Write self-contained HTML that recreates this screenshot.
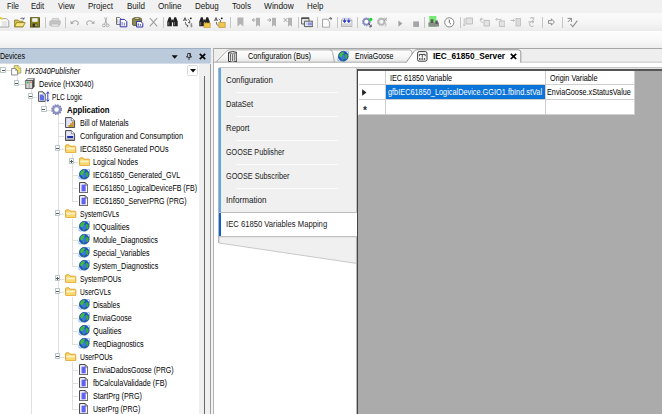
<!DOCTYPE html><html><head><meta charset="utf-8"><title>IEC 61850 Server</title><style>
html,body{margin:0;padding:0;background:#f0f0f0;}
body{width:662px;height:414px;position:relative;overflow:hidden;font-family:"Liberation Sans", "DejaVu Sans", sans-serif;}
.b{position:absolute;}
.t{position:absolute;white-space:pre;line-height:12px;height:12px;transform-origin:0 50%;}

</style></head><body>
<div class="b" style="left:0;top:0;width:662px;height:13px;background:#f1f1f1"></div>
<div class="b" style="left:0;top:12.6px;width:662px;height:18.2px;background:linear-gradient(#fafafa,#f5f5f5 55%,#ebebeb)"></div>
<div class="b" style="left:0;top:30.8px;width:662px;height:17px;background:linear-gradient(#fdfdfd,#f9f9f9 50%,#eeeeee)"></div>
<div class="b" style="left:0;top:47.5px;width:210.7px;height:1px;background:#9fb0c4"></div>
<div class="b" style="left:0;top:48.5px;width:210.7px;height:14px;background:#bccbdc"></div>
<div class="b" style="left:0;top:62.5px;width:210px;height:1.5px;background:#d3dce8"></div>
<div class="b" style="left:0;top:64px;width:199px;height:350px;background:#fff"></div>
<div class="b" style="left:199px;top:64px;width:11px;height:350px;background:#f0f0f0"></div>
<div class="b" style="left:203.8px;top:76px;width:1.1px;height:338px;background:#686868"></div>
<div class="b" style="left:210.2px;top:63.5px;width:1.1px;height:351px;background:#9c9c9c"></div>
<svg style="position:absolute;left:171px;top:52.8px" width="8" height="8" viewBox="0 0 8 8"><path d="M.6 2.2 H6.8 L3.7 5.8Z" fill="#111"/></svg>
<svg style="position:absolute;left:185.6px;top:53px" width="6" height="7" viewBox="0 0 6 7"><path d="M1.7 .5 H4.4 V3.3 H5.3 V4.2 H.7 V3.3 H1.7Z" fill="#e8edf3" stroke="#111" stroke-width=".8"/><path d="M3.5 .6 H4.4 V3.4 H3.5Z" fill="#111"/><path d="M3 4.2 V6.9" stroke="#111" stroke-width=".9"/></svg>
<svg style="position:absolute;left:198.5px;top:52.5px" width="7" height="7" viewBox="0 0 7 7"><path d="M.8 .8 L6.2 6.2 M6.2 .8 L.8 6.2" stroke="#000" stroke-width="1.7"/></svg>
<div class="b" style="left:186.6px;top:65px;width:11px;height:10.5px;background:#fff;border:.7px solid #dadada;border-radius:1.5px;box-sizing:border-box"></div>
<svg style="position:absolute;left:189.9px;top:68.9px" width="6" height="4" viewBox="0 0 6 4"><path d="M0 0 H6 L3 3.4Z" fill="#111"/></svg>
<div class="b" style="left:6.2px;top:69.8px;width:5.2px;height:.8px;background:#e0e0e0"></div>
<div class="b" style="left:17.0px;top:76px;width:.8px;height:8px;background:#e0e0e0"></div>
<div class="b" style="left:31.0px;top:89px;width:.8px;height:325px;background:#e0e0e0"></div>
<div class="b" style="left:44.6px;top:102px;width:.8px;height:8px;background:#e0e0e0"></div>
<div class="b" style="left:58.0px;top:115px;width:.8px;height:242px;background:#e0e0e0"></div>
<div class="b" style="left:71.6px;top:154px;width:.8px;height:47px;background:#e0e0e0"></div>
<div class="b" style="left:71.6px;top:219px;width:.8px;height:47px;background:#e0e0e0"></div>
<div class="b" style="left:71.6px;top:297px;width:.8px;height:47px;background:#e0e0e0"></div>
<div class="b" style="left:71.6px;top:362px;width:.8px;height:47px;background:#e0e0e0"></div>
<div class="b" style="left:17.4px;top:83.6px;width:8.100000000000001px;height:.8px;background:#e0e0e0"></div>
<div class="b" style="left:31.4px;top:96.6px;width:5.300000000000004px;height:.8px;background:#e0e0e0"></div>
<div class="b" style="left:45.0px;top:109.6px;width:5.899999999999999px;height:.8px;background:#e0e0e0"></div>
<div class="b" style="left:58.4px;top:122.6px;width:6.100000000000001px;height:.8px;background:#e0e0e0"></div>
<div class="b" style="left:58.4px;top:135.6px;width:6.100000000000001px;height:.8px;background:#e0e0e0"></div>
<div class="b" style="left:58.4px;top:148.6px;width:6.100000000000001px;height:.8px;background:#e0e0e0"></div>
<div class="b" style="left:72.0px;top:161.6px;width:6.099999999999994px;height:.8px;background:#e0e0e0"></div>
<div class="b" style="left:72.0px;top:174.6px;width:6.099999999999994px;height:.8px;background:#e0e0e0"></div>
<div class="b" style="left:72.0px;top:187.6px;width:6.099999999999994px;height:.8px;background:#e0e0e0"></div>
<div class="b" style="left:72.0px;top:200.6px;width:6.099999999999994px;height:.8px;background:#e0e0e0"></div>
<div class="b" style="left:58.4px;top:213.6px;width:6.100000000000001px;height:.8px;background:#e0e0e0"></div>
<div class="b" style="left:72.0px;top:226.6px;width:6.099999999999994px;height:.8px;background:#e0e0e0"></div>
<div class="b" style="left:72.0px;top:239.6px;width:6.099999999999994px;height:.8px;background:#e0e0e0"></div>
<div class="b" style="left:72.0px;top:252.6px;width:6.099999999999994px;height:.8px;background:#e0e0e0"></div>
<div class="b" style="left:72.0px;top:265.6px;width:6.099999999999994px;height:.8px;background:#e0e0e0"></div>
<div class="b" style="left:58.4px;top:278.6px;width:6.100000000000001px;height:.8px;background:#e0e0e0"></div>
<div class="b" style="left:58.4px;top:291.6px;width:6.100000000000001px;height:.8px;background:#e0e0e0"></div>
<div class="b" style="left:72.0px;top:304.6px;width:6.099999999999994px;height:.8px;background:#e0e0e0"></div>
<div class="b" style="left:72.0px;top:317.6px;width:6.099999999999994px;height:.8px;background:#e0e0e0"></div>
<div class="b" style="left:72.0px;top:330.6px;width:6.099999999999994px;height:.8px;background:#e0e0e0"></div>
<div class="b" style="left:72.0px;top:343.6px;width:6.099999999999994px;height:.8px;background:#e0e0e0"></div>
<div class="b" style="left:58.4px;top:356.6px;width:6.100000000000001px;height:.8px;background:#e0e0e0"></div>
<div class="b" style="left:72.0px;top:369.6px;width:6.099999999999994px;height:.8px;background:#e0e0e0"></div>
<div class="b" style="left:72.0px;top:382.6px;width:6.099999999999994px;height:.8px;background:#e0e0e0"></div>
<div class="b" style="left:72.0px;top:395.6px;width:6.099999999999994px;height:.8px;background:#e0e0e0"></div>
<div class="b" style="left:72.0px;top:408.6px;width:6.099999999999994px;height:.8px;background:#e0e0e0"></div>
<div class="b" style="left:0.2999999999999998px;top:67.39999999999999px;width:5.4px;height:5.4px;background:#fff;border:.7px solid #b4c6c6;box-sizing:border-box;border-radius:.8px"></div>
<div class="b" style="left:1.5px;top:69.69999999999999px;width:3px;height:.8px;background:#5a5a5a"></div>
<svg style="position:absolute;left:11.4px;top:65.3px" width="10.4" height="10.6" viewBox="0 0 10.4 10.6"><path d="M3.2 .6 H7.2 L9.8 3.2 V8.2 H3.2Z" fill="#ebe466" stroke="#8d8d6e" stroke-width=".7"/><path d="M7.2 .6 V3.2 H9.8" fill="#fff9b0" stroke="#8d8d6e" stroke-width=".5"/><path d="M.6 3.6 H4.6 L6.6 5.6 V10 H.6Z" fill="#fff" stroke="#707070" stroke-width=".8"/><path d="M4.6 3.6 V5.6 H6.6" fill="none" stroke="#707070" stroke-width=".5"/></svg>
<div class="b" style="left:13.8px;top:80.39999999999999px;width:5.4px;height:5.4px;background:#fff;border:.7px solid #b4c6c6;box-sizing:border-box;border-radius:.8px"></div>
<div class="b" style="left:15.0px;top:82.69999999999999px;width:3px;height:.8px;background:#5a5a5a"></div>
<svg style="position:absolute;left:25.0px;top:78.1px" width="10.4" height="11.4" viewBox="0 0 10.4 11.4"><path d="M.8 2.4 L2.8 .6 H9.6 V8.8 L7.6 10.8 H.8Z" fill="#4a4a4a"/><path d="M.8 2.4 L2.8 .6 H9.6 L7.6 2.4Z" fill="#f2f2f2" stroke="#555" stroke-width=".5"/><rect x=".8" y="2.4" width="6.8" height="8.4" fill="#d6d6d6" stroke="#4a4a4a" stroke-width=".8"/><path d="M4.2 3 V10.4" stroke="#8c8c8c" stroke-width=".7"/><circle cx="2.8" cy="4.6" r="1" fill="#2fbf40"/><circle cx="5.9" cy="4.3" r=".8" fill="#d84a4a"/></svg>
<div class="b" style="left:27.5px;top:93.39999999999999px;width:5.4px;height:5.4px;background:#fff;border:.7px solid #b4c6c6;box-sizing:border-box;border-radius:.8px"></div>
<div class="b" style="left:28.7px;top:95.69999999999999px;width:3px;height:.8px;background:#5a5a5a"></div>
<svg style="position:absolute;left:37.6px;top:90.89999999999999px" width="12" height="11.4" viewBox="0 0 12 11.4"><path d="M.6 .8 H5 L7.2 3 V10.4 H.6Z" fill="#fff" stroke="#3c3c3c" stroke-width=".9"/><path d="M5 .8 V3 H7.2" fill="none" stroke="#3c3c3c" stroke-width=".5"/><path d="M1.7 3.6 H4.6 L6 5 V9.4 H1.7Z" fill="#5f70e6"/><path d="M9.8 1 V10.2 M8.6 2.6 L9.8 .8 L11 2.6 M8.6 8.6 L9.8 10.4 L11 8.6" stroke="#3040e0" stroke-width="1" fill="none"/></svg>
<div class="b" style="left:41.199999999999996px;top:106.39999999999999px;width:5.4px;height:5.4px;background:#fff;border:.7px solid #b4c6c6;box-sizing:border-box;border-radius:.8px"></div>
<div class="b" style="left:42.4px;top:108.69999999999999px;width:3px;height:.8px;background:#5a5a5a"></div>
<svg style="position:absolute;left:51.4px;top:103.7px" width="11.6" height="11.6" viewBox="0 0 11.6 11.6"><circle cx="5.6" cy="5.6" r="3.5" fill="none" stroke="#8a90c2" stroke-width="2.4"/><circle cx="5.6" cy="5.6" r="4.9" fill="none" stroke="#7c82b6" stroke-width="1.1" stroke-dasharray="1.5 1.07"/><circle cx="5.6" cy="5.6" r="2.3" fill="#fff" stroke="#a4a9d0" stroke-width=".5"/></svg>
<svg style="position:absolute;left:65.4px;top:117.1px" width="10.4" height="11.2" viewBox="0 0 10.4 11.2"><path d="M.6 .6 H6.4 L9.6 3.8 V10.6 H.6Z" fill="#e2e2fa" stroke="#333" stroke-width=".9"/><path d="M6.4 .6 V3.8 H9.6" fill="#fff" stroke="#333" stroke-width=".5"/><path d="M3.4 10 V8 H5.2 V6.2 H7 V4.6 H8.8 V10Z" fill="#c8962c"/></svg>
<svg style="position:absolute;left:65.4px;top:130.10000000000002px" width="10.4" height="11.2" viewBox="0 0 10.4 11.2"><path d="M.6 .6 H6.4 L9.6 3.8 V10.6 H.6Z" fill="#e6e6fa" stroke="#333" stroke-width=".9"/><path d="M6.4 .6 V3.8 H9.6" fill="#fff" stroke="#333" stroke-width=".5"/><rect x="2.2" y="6" width="6" height="2" fill="#1f2fa6"/><path d="M1.4 9.2 H8.8" stroke="#8a8a8a" stroke-width="1.2"/></svg>
<div class="b" style="left:55.0px;top:145.4px;width:5.4px;height:5.4px;background:#fff;border:.7px solid #b4c6c6;box-sizing:border-box;border-radius:.8px"></div>
<div class="b" style="left:56.2px;top:147.7px;width:3px;height:.8px;background:#5a5a5a"></div>
<svg style="position:absolute;left:65.0px;top:143.70000000000002px" width="11.6" height="9.4" viewBox="0 0 11.6 9.4"><path d="M.6 2 Q.6 .8 1.6 .8 H3.8 L5 2.2 H9.8 Q10.8 2.2 10.8 3.2 V7.8 Q10.8 8.8 9.8 8.8 H1.6 Q.6 8.8 .6 7.8Z" fill="#f7d873" stroke="#dc9c1e" stroke-width=".9"/><path d="M1.3 3.6 H10.1 V5.4 H1.3Z" fill="#fdf3c4"/></svg>
<div class="b" style="left:68.7px;top:158.4px;width:5.4px;height:5.4px;background:#fff;border:.7px solid #b4c6c6;box-sizing:border-box;border-radius:.8px"></div>
<div class="b" style="left:69.9px;top:160.7px;width:3px;height:.8px;background:#5a5a5a"></div>
<div class="b" style="left:71.0px;top:159.6px;width:.8px;height:3px;background:#5a5a5a"></div>
<svg style="position:absolute;left:78.6px;top:156.70000000000002px" width="11.6" height="9.4" viewBox="0 0 11.6 9.4"><path d="M.6 2 Q.6 .8 1.6 .8 H3.8 L5 2.2 H9.8 Q10.8 2.2 10.8 3.2 V7.8 Q10.8 8.8 9.8 8.8 H1.6 Q.6 8.8 .6 7.8Z" fill="#f7d873" stroke="#dc9c1e" stroke-width=".9"/><path d="M1.3 3.6 H10.1 V5.4 H1.3Z" fill="#fdf3c4"/></svg>
<svg style="position:absolute;left:77.89999999999999px;top:167.70000000000002px" width="12.6" height="12.6" viewBox="0 0 12 12"><ellipse cx="6" cy="6" rx="6.3" ry="2.3" transform="rotate(-40 6 6)" fill="none" stroke="#7db6f6" stroke-width=".9"/><circle cx="6" cy="6" r="4.7" fill="#1f54c6"/><circle cx="5.8" cy="6.8" r="2.2" fill="#3a78e0"/><path d="M2 4.6 Q2.8 2.2 5.6 1.7 Q7.2 2.2 6.4 3.6 Q5.4 4.6 4.8 5.6 Q4.2 7.4 3 7 Q1.7 6.2 2 4.6Z" fill="#3fbe44"/><path d="M7.4 3.8 Q9.4 3.4 10.3 5.2 Q10.6 7.6 8.9 9 Q7.6 8.2 7.9 6.6 Q7 5 7.4 3.8Z" fill="#37ad3c"/><path d="M4.4 8.8 Q5.6 8.2 6.6 9.4 Q5.8 10.5 4.8 10.2Z" fill="#2e9c50"/><circle cx="6" cy="6" r="4.7" fill="none" stroke="#173a8a" stroke-width=".5"/><path d="M8.4 1.6 Q10.4 1 11.3 1.9" stroke="#a8d2ff" stroke-width=".8" fill="none"/></svg>
<svg style="position:absolute;left:79.1px;top:181.9px" width="9.4" height="11.4" viewBox="0 0 9.4 11.4"><path d="M.6 .6 H6.2 L8.8 3.2 V10.8 H.6Z" fill="#fff" stroke="#3a3a3a" stroke-width="1"/><path d="M6.2 .6 V3.2 H8.8" fill="none" stroke="#3a3a3a" stroke-width=".6"/><rect x="2.5" y="2.6" width="4.2" height="6.8" fill="#6262f0"/></svg>
<svg style="position:absolute;left:79.1px;top:194.9px" width="9.4" height="11.4" viewBox="0 0 9.4 11.4"><path d="M.6 .6 H6.2 L8.8 3.2 V10.8 H.6Z" fill="#fff" stroke="#3a3a3a" stroke-width="1"/><path d="M6.2 .6 V3.2 H8.8" fill="none" stroke="#3a3a3a" stroke-width=".6"/><rect x="2.5" y="2.6" width="4.2" height="6.8" fill="#6262f0"/></svg>
<div class="b" style="left:55.0px;top:210.4px;width:5.4px;height:5.4px;background:#fff;border:.7px solid #b4c6c6;box-sizing:border-box;border-radius:.8px"></div>
<div class="b" style="left:56.2px;top:212.7px;width:3px;height:.8px;background:#5a5a5a"></div>
<svg style="position:absolute;left:65.0px;top:208.70000000000002px" width="11.6" height="9.4" viewBox="0 0 11.6 9.4"><path d="M.6 2 Q.6 .8 1.6 .8 H3.8 L5 2.2 H9.8 Q10.8 2.2 10.8 3.2 V7.8 Q10.8 8.8 9.8 8.8 H1.6 Q.6 8.8 .6 7.8Z" fill="#f7d873" stroke="#dc9c1e" stroke-width=".9"/><path d="M1.3 3.6 H10.1 V5.4 H1.3Z" fill="#fdf3c4"/></svg>
<svg style="position:absolute;left:77.89999999999999px;top:219.70000000000002px" width="12.6" height="12.6" viewBox="0 0 12 12"><ellipse cx="6" cy="6" rx="6.3" ry="2.3" transform="rotate(-40 6 6)" fill="none" stroke="#7db6f6" stroke-width=".9"/><circle cx="6" cy="6" r="4.7" fill="#1f54c6"/><circle cx="5.8" cy="6.8" r="2.2" fill="#3a78e0"/><path d="M2 4.6 Q2.8 2.2 5.6 1.7 Q7.2 2.2 6.4 3.6 Q5.4 4.6 4.8 5.6 Q4.2 7.4 3 7 Q1.7 6.2 2 4.6Z" fill="#3fbe44"/><path d="M7.4 3.8 Q9.4 3.4 10.3 5.2 Q10.6 7.6 8.9 9 Q7.6 8.2 7.9 6.6 Q7 5 7.4 3.8Z" fill="#37ad3c"/><path d="M4.4 8.8 Q5.6 8.2 6.6 9.4 Q5.8 10.5 4.8 10.2Z" fill="#2e9c50"/><circle cx="6" cy="6" r="4.7" fill="none" stroke="#173a8a" stroke-width=".5"/><path d="M8.4 1.6 Q10.4 1 11.3 1.9" stroke="#a8d2ff" stroke-width=".8" fill="none"/></svg>
<svg style="position:absolute;left:77.89999999999999px;top:232.70000000000002px" width="12.6" height="12.6" viewBox="0 0 12 12"><ellipse cx="6" cy="6" rx="6.3" ry="2.3" transform="rotate(-40 6 6)" fill="none" stroke="#7db6f6" stroke-width=".9"/><circle cx="6" cy="6" r="4.7" fill="#1f54c6"/><circle cx="5.8" cy="6.8" r="2.2" fill="#3a78e0"/><path d="M2 4.6 Q2.8 2.2 5.6 1.7 Q7.2 2.2 6.4 3.6 Q5.4 4.6 4.8 5.6 Q4.2 7.4 3 7 Q1.7 6.2 2 4.6Z" fill="#3fbe44"/><path d="M7.4 3.8 Q9.4 3.4 10.3 5.2 Q10.6 7.6 8.9 9 Q7.6 8.2 7.9 6.6 Q7 5 7.4 3.8Z" fill="#37ad3c"/><path d="M4.4 8.8 Q5.6 8.2 6.6 9.4 Q5.8 10.5 4.8 10.2Z" fill="#2e9c50"/><circle cx="6" cy="6" r="4.7" fill="none" stroke="#173a8a" stroke-width=".5"/><path d="M8.4 1.6 Q10.4 1 11.3 1.9" stroke="#a8d2ff" stroke-width=".8" fill="none"/></svg>
<svg style="position:absolute;left:77.89999999999999px;top:245.70000000000002px" width="12.6" height="12.6" viewBox="0 0 12 12"><ellipse cx="6" cy="6" rx="6.3" ry="2.3" transform="rotate(-40 6 6)" fill="none" stroke="#7db6f6" stroke-width=".9"/><circle cx="6" cy="6" r="4.7" fill="#1f54c6"/><circle cx="5.8" cy="6.8" r="2.2" fill="#3a78e0"/><path d="M2 4.6 Q2.8 2.2 5.6 1.7 Q7.2 2.2 6.4 3.6 Q5.4 4.6 4.8 5.6 Q4.2 7.4 3 7 Q1.7 6.2 2 4.6Z" fill="#3fbe44"/><path d="M7.4 3.8 Q9.4 3.4 10.3 5.2 Q10.6 7.6 8.9 9 Q7.6 8.2 7.9 6.6 Q7 5 7.4 3.8Z" fill="#37ad3c"/><path d="M4.4 8.8 Q5.6 8.2 6.6 9.4 Q5.8 10.5 4.8 10.2Z" fill="#2e9c50"/><circle cx="6" cy="6" r="4.7" fill="none" stroke="#173a8a" stroke-width=".5"/><path d="M8.4 1.6 Q10.4 1 11.3 1.9" stroke="#a8d2ff" stroke-width=".8" fill="none"/></svg>
<svg style="position:absolute;left:77.89999999999999px;top:258.7px" width="12.6" height="12.6" viewBox="0 0 12 12"><ellipse cx="6" cy="6" rx="6.3" ry="2.3" transform="rotate(-40 6 6)" fill="none" stroke="#7db6f6" stroke-width=".9"/><circle cx="6" cy="6" r="4.7" fill="#1f54c6"/><circle cx="5.8" cy="6.8" r="2.2" fill="#3a78e0"/><path d="M2 4.6 Q2.8 2.2 5.6 1.7 Q7.2 2.2 6.4 3.6 Q5.4 4.6 4.8 5.6 Q4.2 7.4 3 7 Q1.7 6.2 2 4.6Z" fill="#3fbe44"/><path d="M7.4 3.8 Q9.4 3.4 10.3 5.2 Q10.6 7.6 8.9 9 Q7.6 8.2 7.9 6.6 Q7 5 7.4 3.8Z" fill="#37ad3c"/><path d="M4.4 8.8 Q5.6 8.2 6.6 9.4 Q5.8 10.5 4.8 10.2Z" fill="#2e9c50"/><circle cx="6" cy="6" r="4.7" fill="none" stroke="#173a8a" stroke-width=".5"/><path d="M8.4 1.6 Q10.4 1 11.3 1.9" stroke="#a8d2ff" stroke-width=".8" fill="none"/></svg>
<div class="b" style="left:55.0px;top:275.40000000000003px;width:5.4px;height:5.4px;background:#fff;border:.7px solid #b4c6c6;box-sizing:border-box;border-radius:.8px"></div>
<div class="b" style="left:56.2px;top:277.70000000000005px;width:3px;height:.8px;background:#5a5a5a"></div>
<div class="b" style="left:57.300000000000004px;top:276.6px;width:.8px;height:3px;background:#5a5a5a"></div>
<svg style="position:absolute;left:65.0px;top:273.7px" width="11.6" height="9.4" viewBox="0 0 11.6 9.4"><path d="M.6 2 Q.6 .8 1.6 .8 H3.8 L5 2.2 H9.8 Q10.8 2.2 10.8 3.2 V7.8 Q10.8 8.8 9.8 8.8 H1.6 Q.6 8.8 .6 7.8Z" fill="#f7d873" stroke="#dc9c1e" stroke-width=".9"/><path d="M1.3 3.6 H10.1 V5.4 H1.3Z" fill="#fdf3c4"/></svg>
<div class="b" style="left:55.0px;top:288.40000000000003px;width:5.4px;height:5.4px;background:#fff;border:.7px solid #b4c6c6;box-sizing:border-box;border-radius:.8px"></div>
<div class="b" style="left:56.2px;top:290.70000000000005px;width:3px;height:.8px;background:#5a5a5a"></div>
<svg style="position:absolute;left:65.0px;top:286.7px" width="11.6" height="9.4" viewBox="0 0 11.6 9.4"><path d="M.6 2 Q.6 .8 1.6 .8 H3.8 L5 2.2 H9.8 Q10.8 2.2 10.8 3.2 V7.8 Q10.8 8.8 9.8 8.8 H1.6 Q.6 8.8 .6 7.8Z" fill="#f7d873" stroke="#dc9c1e" stroke-width=".9"/><path d="M1.3 3.6 H10.1 V5.4 H1.3Z" fill="#fdf3c4"/></svg>
<svg style="position:absolute;left:77.89999999999999px;top:297.7px" width="12.6" height="12.6" viewBox="0 0 12 12"><ellipse cx="6" cy="6" rx="6.3" ry="2.3" transform="rotate(-40 6 6)" fill="none" stroke="#7db6f6" stroke-width=".9"/><circle cx="6" cy="6" r="4.7" fill="#1f54c6"/><circle cx="5.8" cy="6.8" r="2.2" fill="#3a78e0"/><path d="M2 4.6 Q2.8 2.2 5.6 1.7 Q7.2 2.2 6.4 3.6 Q5.4 4.6 4.8 5.6 Q4.2 7.4 3 7 Q1.7 6.2 2 4.6Z" fill="#3fbe44"/><path d="M7.4 3.8 Q9.4 3.4 10.3 5.2 Q10.6 7.6 8.9 9 Q7.6 8.2 7.9 6.6 Q7 5 7.4 3.8Z" fill="#37ad3c"/><path d="M4.4 8.8 Q5.6 8.2 6.6 9.4 Q5.8 10.5 4.8 10.2Z" fill="#2e9c50"/><circle cx="6" cy="6" r="4.7" fill="none" stroke="#173a8a" stroke-width=".5"/><path d="M8.4 1.6 Q10.4 1 11.3 1.9" stroke="#a8d2ff" stroke-width=".8" fill="none"/></svg>
<svg style="position:absolute;left:77.89999999999999px;top:310.7px" width="12.6" height="12.6" viewBox="0 0 12 12"><ellipse cx="6" cy="6" rx="6.3" ry="2.3" transform="rotate(-40 6 6)" fill="none" stroke="#7db6f6" stroke-width=".9"/><circle cx="6" cy="6" r="4.7" fill="#1f54c6"/><circle cx="5.8" cy="6.8" r="2.2" fill="#3a78e0"/><path d="M2 4.6 Q2.8 2.2 5.6 1.7 Q7.2 2.2 6.4 3.6 Q5.4 4.6 4.8 5.6 Q4.2 7.4 3 7 Q1.7 6.2 2 4.6Z" fill="#3fbe44"/><path d="M7.4 3.8 Q9.4 3.4 10.3 5.2 Q10.6 7.6 8.9 9 Q7.6 8.2 7.9 6.6 Q7 5 7.4 3.8Z" fill="#37ad3c"/><path d="M4.4 8.8 Q5.6 8.2 6.6 9.4 Q5.8 10.5 4.8 10.2Z" fill="#2e9c50"/><circle cx="6" cy="6" r="4.7" fill="none" stroke="#173a8a" stroke-width=".5"/><path d="M8.4 1.6 Q10.4 1 11.3 1.9" stroke="#a8d2ff" stroke-width=".8" fill="none"/></svg>
<svg style="position:absolute;left:77.89999999999999px;top:323.7px" width="12.6" height="12.6" viewBox="0 0 12 12"><ellipse cx="6" cy="6" rx="6.3" ry="2.3" transform="rotate(-40 6 6)" fill="none" stroke="#7db6f6" stroke-width=".9"/><circle cx="6" cy="6" r="4.7" fill="#1f54c6"/><circle cx="5.8" cy="6.8" r="2.2" fill="#3a78e0"/><path d="M2 4.6 Q2.8 2.2 5.6 1.7 Q7.2 2.2 6.4 3.6 Q5.4 4.6 4.8 5.6 Q4.2 7.4 3 7 Q1.7 6.2 2 4.6Z" fill="#3fbe44"/><path d="M7.4 3.8 Q9.4 3.4 10.3 5.2 Q10.6 7.6 8.9 9 Q7.6 8.2 7.9 6.6 Q7 5 7.4 3.8Z" fill="#37ad3c"/><path d="M4.4 8.8 Q5.6 8.2 6.6 9.4 Q5.8 10.5 4.8 10.2Z" fill="#2e9c50"/><circle cx="6" cy="6" r="4.7" fill="none" stroke="#173a8a" stroke-width=".5"/><path d="M8.4 1.6 Q10.4 1 11.3 1.9" stroke="#a8d2ff" stroke-width=".8" fill="none"/></svg>
<svg style="position:absolute;left:77.89999999999999px;top:336.7px" width="12.6" height="12.6" viewBox="0 0 12 12"><ellipse cx="6" cy="6" rx="6.3" ry="2.3" transform="rotate(-40 6 6)" fill="none" stroke="#7db6f6" stroke-width=".9"/><circle cx="6" cy="6" r="4.7" fill="#1f54c6"/><circle cx="5.8" cy="6.8" r="2.2" fill="#3a78e0"/><path d="M2 4.6 Q2.8 2.2 5.6 1.7 Q7.2 2.2 6.4 3.6 Q5.4 4.6 4.8 5.6 Q4.2 7.4 3 7 Q1.7 6.2 2 4.6Z" fill="#3fbe44"/><path d="M7.4 3.8 Q9.4 3.4 10.3 5.2 Q10.6 7.6 8.9 9 Q7.6 8.2 7.9 6.6 Q7 5 7.4 3.8Z" fill="#37ad3c"/><path d="M4.4 8.8 Q5.6 8.2 6.6 9.4 Q5.8 10.5 4.8 10.2Z" fill="#2e9c50"/><circle cx="6" cy="6" r="4.7" fill="none" stroke="#173a8a" stroke-width=".5"/><path d="M8.4 1.6 Q10.4 1 11.3 1.9" stroke="#a8d2ff" stroke-width=".8" fill="none"/></svg>
<div class="b" style="left:55.0px;top:353.40000000000003px;width:5.4px;height:5.4px;background:#fff;border:.7px solid #b4c6c6;box-sizing:border-box;border-radius:.8px"></div>
<div class="b" style="left:56.2px;top:355.70000000000005px;width:3px;height:.8px;background:#5a5a5a"></div>
<svg style="position:absolute;left:65.0px;top:351.7px" width="11.6" height="9.4" viewBox="0 0 11.6 9.4"><path d="M.6 2 Q.6 .8 1.6 .8 H3.8 L5 2.2 H9.8 Q10.8 2.2 10.8 3.2 V7.8 Q10.8 8.8 9.8 8.8 H1.6 Q.6 8.8 .6 7.8Z" fill="#f7d873" stroke="#dc9c1e" stroke-width=".9"/><path d="M1.3 3.6 H10.1 V5.4 H1.3Z" fill="#fdf3c4"/></svg>
<svg style="position:absolute;left:79.1px;top:363.90000000000003px" width="9.4" height="11.4" viewBox="0 0 9.4 11.4"><path d="M.6 .6 H6.2 L8.8 3.2 V10.8 H.6Z" fill="#fff" stroke="#3a3a3a" stroke-width="1"/><path d="M6.2 .6 V3.2 H8.8" fill="none" stroke="#3a3a3a" stroke-width=".6"/><rect x="2.5" y="2.6" width="4.2" height="6.8" fill="#6262f0"/></svg>
<svg style="position:absolute;left:79.1px;top:376.90000000000003px" width="9.4" height="11.4" viewBox="0 0 9.4 11.4"><path d="M.6 .6 H6.2 L8.8 3.2 V10.8 H.6Z" fill="#fff" stroke="#3a3a3a" stroke-width="1"/><path d="M6.2 .6 V3.2 H8.8" fill="none" stroke="#3a3a3a" stroke-width=".6"/><rect x="2.5" y="2.6" width="4.2" height="6.8" fill="#6262f0"/></svg>
<svg style="position:absolute;left:79.1px;top:389.90000000000003px" width="9.4" height="11.4" viewBox="0 0 9.4 11.4"><path d="M.6 .6 H6.2 L8.8 3.2 V10.8 H.6Z" fill="#fff" stroke="#3a3a3a" stroke-width="1"/><path d="M6.2 .6 V3.2 H8.8" fill="none" stroke="#3a3a3a" stroke-width=".6"/><rect x="2.5" y="2.6" width="4.2" height="6.8" fill="#6262f0"/></svg>
<svg style="position:absolute;left:79.1px;top:402.90000000000003px" width="9.4" height="11.4" viewBox="0 0 9.4 11.4"><path d="M.6 .6 H6.2 L8.8 3.2 V10.8 H.6Z" fill="#fff" stroke="#3a3a3a" stroke-width="1"/><path d="M6.2 .6 V3.2 H8.8" fill="none" stroke="#3a3a3a" stroke-width=".6"/><rect x="2.5" y="2.6" width="4.2" height="6.8" fill="#6262f0"/></svg>
<div class="b" style="left:210.7px;top:47.5px;width:2.5px;height:16px;background:#efefef"></div><div class="b" style="left:211.3px;top:63.5px;width:1.9px;height:351px;background:#f4f4f4"></div>
<div class="b" style="left:213px;top:47.5px;width:449px;height:1px;background:#a6a6a6"></div>
<div class="b" style="left:213px;top:48px;width:1px;height:366px;background:#b0b0b0"></div>
<div class="b" style="left:214px;top:48.5px;width:448px;height:13.5px;background:#eeeeee"></div>
<div class="b" style="left:214px;top:62px;width:448px;height:352px;background:#fff"></div>
<svg style="position:absolute;left:213px;top:48px" width="449" height="16" viewBox="0 0 449 16"><defs><linearGradient id="tg" x1="0" y1="0" x2="0" y2="1"><stop offset="0" stop-color="#ffffff"/><stop offset=".55" stop-color="#f6f6f6"/><stop offset="1" stop-color="#e6e6e6"/></linearGradient></defs><path d="M116 14.2 V1.9 H196.2 Q198.6 1.9 198.9 4.2 V14.2" fill="url(#tg)" stroke="#9a9a9a" stroke-width=".8"/><path d="M3 14.2 L14 2.7 Q14.8 1.9 16 1.9 H116.6 Q119 1.9 119.6 4.2 L121.4 14.2" fill="url(#tg)" stroke="#9a9a9a" stroke-width=".8"/><path d="M0 14.2 H193.2" stroke="#9a9a9a" stroke-width=".8"/><path d="M193 14.7 L201 3.4 Q202 1.8 203.6 1.8 H305 Q307.5 1.8 307.8 4.2 V14.7" fill="#fff" stroke="#8a8a8a" stroke-width=".9"/><path d="M307.8 14.2 H449" stroke="#b5b5b5" stroke-width=".8"/></svg>
<svg style="position:absolute;left:228px;top:50.6px" width="9.4" height="11.6" viewBox="0 0 9.4 11.6"><path d="M.6 1.4 Q4.7 -.2 8.8 1.4 V10.4 Q4.7 12 .6 10.4Z" fill="#f6f6f6" stroke="#2c2c2c" stroke-width="1"/><path d="M.8 2 Q4.7 3.4 8.6 2" fill="none" stroke="#444" stroke-width=".6"/><path d="M2.6 3 V9.8 M4.7 3.2 V10.2 M6.8 3 V9.8" stroke="#444" stroke-width=".9"/></svg>
<svg style="position:absolute;left:336.7px;top:49.99999999999999px" width="12.6" height="12.6" viewBox="0 0 12 12"><ellipse cx="6" cy="6" rx="6.3" ry="2.3" transform="rotate(-40 6 6)" fill="none" stroke="#7db6f6" stroke-width=".9"/><circle cx="6" cy="6" r="4.7" fill="#1f54c6"/><circle cx="5.8" cy="6.8" r="2.2" fill="#3a78e0"/><path d="M2 4.6 Q2.8 2.2 5.6 1.7 Q7.2 2.2 6.4 3.6 Q5.4 4.6 4.8 5.6 Q4.2 7.4 3 7 Q1.7 6.2 2 4.6Z" fill="#3fbe44"/><path d="M7.4 3.8 Q9.4 3.4 10.3 5.2 Q10.6 7.6 8.9 9 Q7.6 8.2 7.9 6.6 Q7 5 7.4 3.8Z" fill="#37ad3c"/><path d="M4.4 8.8 Q5.6 8.2 6.6 9.4 Q5.8 10.5 4.8 10.2Z" fill="#2e9c50"/><circle cx="6" cy="6" r="4.7" fill="none" stroke="#173a8a" stroke-width=".5"/><path d="M8.4 1.6 Q10.4 1 11.3 1.9" stroke="#a8d2ff" stroke-width=".8" fill="none"/></svg>
<svg style="position:absolute;left:417.4px;top:51.4px" width="10.6" height="10.8" viewBox="0 0 10.6 10.8"><rect x=".6" y=".6" width="9.4" height="9.6" rx="1.6" fill="#fdfdfd" stroke="#3c3c3c" stroke-width="1"/><path d="M2.4 5.2 V3.4 H8.2 V5.2 M5.3 3.4 V6.6" stroke="#444" stroke-width="1" fill="none"/><path d="M2 8 H8.6" stroke="#333" stroke-width="1.5" stroke-dasharray="1.5 .9"/></svg>
<svg style="position:absolute;left:510.4px;top:53.4px" width="7" height="6.8" viewBox="0 0 7 6.8"><path d="M.8 .8 L6.2 6 M6.2 .8 L.8 6" stroke="#000" stroke-width="1.7"/></svg>
<div class="b" style="left:218.3px;top:67.5px;width:.9px;height:175px;background:#b4b4b4"></div>
<div class="b" style="left:219px;top:67.3px;width:443px;height:1px;background:#c6c6c6"></div>
<div class="b" style="left:219.1px;top:68.2px;width:137.4px;height:144px;background:#f0f0f0"></div>
<div class="b" style="left:219.1px;top:68.2px;width:2px;height:144px;background:#5aa7ee"></div>
<div class="b" style="left:236px;top:91.5px;width:102px;height:1px;background:#fbfbfb"></div>
<div class="b" style="left:236px;top:115.5px;width:102px;height:1px;background:#fbfbfb"></div>
<div class="b" style="left:236px;top:139.5px;width:102px;height:1px;background:#fbfbfb"></div>
<div class="b" style="left:236px;top:163.5px;width:102px;height:1px;background:#fbfbfb"></div>
<div class="b" style="left:236px;top:187.5px;width:102px;height:1px;background:#fbfbfb"></div>
<div class="b" style="left:219.1px;top:212px;width:138px;height:.9px;background:#bdbdbd"></div>
<div class="b" style="left:219.1px;top:212.9px;width:139px;height:23px;background:#fff"></div>
<div class="b" style="left:219.1px;top:212.9px;width:2px;height:23px;background:#0a63cf"></div>
<div class="b" style="left:219.1px;top:235.9px;width:138px;height:.9px;background:#bdbdbd"></div>
<svg style="position:absolute;left:218px;top:236px" width="140" height="30" viewBox="0 0 140 30"><path d="M1 .8 H138.4 V27.4 L1 7Z" fill="#f0f0f0" stroke="#bdbdbd" stroke-width=".8"/></svg>
<div class="b" style="left:356.2px;top:68px;width:1px;height:144px;background:#c0c0c0"></div>
<div class="b" style="left:356.2px;top:236.5px;width:1px;height:178px;background:#b8b8b8"></div>
<div class="b" style="left:357.2px;top:68.3px;width:304.8px;height:1px;background:#e2e2e2"></div>
<div class="b" style="left:357.2px;top:69.2px;width:304.8px;height:344.8px;background:#ababab"></div>
<div class="b" style="left:357.2px;top:69.2px;width:304.8px;height:1.8px;background:#555"></div>
<div class="b" style="left:357px;top:69.2px;width:1.4px;height:344.8px;background:#444"></div>
<div class="b" style="left:358.4px;top:71px;width:276.4px;height:43.7px;background:#fff"></div>
<div class="b" style="left:358.8px;top:84.0px;width:276.2px;height:1px;background:#cfcfcf"></div>
<div class="b" style="left:358.8px;top:99.2px;width:276.2px;height:1px;background:#cfcfcf"></div>
<div class="b" style="left:358.8px;top:114.1px;width:276.2px;height:1px;background:#cfcfcf"></div>
<div class="b" style="left:384.8px;top:71.3px;width:1px;height:43.8px;background:#cfcfcf"></div>
<div class="b" style="left:544.7px;top:71.3px;width:1px;height:43.8px;background:#cfcfcf"></div>
<div class="b" style="left:634.3px;top:71.3px;width:1px;height:43.8px;background:#cfcfcf"></div>
<div class="b" style="left:385.8px;top:85.1px;width:159px;height:14.1px;background:#0a74d9"></div>
<svg style="position:absolute;left:361.8px;top:89.2px" width="4.8" height="7" viewBox="0 0 4.8 7"><path d="M.1 .2 L4.5 3.5 L.1 6.8Z" fill="#222"/></svg>
<div class="t" style="left:363.2px;top:103.6px;font-size:11px;line-height:12px;color:#2a2a2a;font-weight:bold;transform:scale(.92)">*</div>
<svg style="position:absolute;left:0px;top:17px" width="9.8" height="11" viewBox="0 0 9.8 11"><path d="M-1 1.6 H6.4 L8.8 4 V10 H-1Z" fill="#fff" stroke="#8a8a8a" stroke-width=".8"/><path d="M1.6 4 H7.4 V9 H1.6Z" fill="#e6e6e6"/><path d="M1.2 -.2 L1.8 2.8 M-.4 1.2 L3 1.6 M0 0 L2.6 2.8" stroke="#e8d020" stroke-width=".8"/></svg>
<svg style="position:absolute;left:13.6px;top:17px" width="12" height="11" viewBox="0 0 12 11"><path d="M.6 3 H4 L5 4.2 H9 V9.8 H.6Z" fill="#d9c44a" stroke="#7c6b12" stroke-width=".7"/><path d="M2.6 5.6 H11.2 L9 9.8 H.6Z" fill="#f4e47a" stroke="#7c6b12" stroke-width=".7"/><path d="M6.4 1.6 Q8.4 .2 10 2 M10 2 L10.3 .6 M10 2 L8.6 2.1" stroke="#333" stroke-width=".7" fill="none"/></svg>
<svg style="position:absolute;left:30px;top:17px" width="10" height="11" viewBox="0 0 10 11"><rect x=".5" y=".7" width="9" height="9.4" fill="#8a8420" stroke="#4c480c" stroke-width=".8"/><rect x="2.2" y="1.2" width="5.4" height="3.6" fill="#f3f3f3"/><rect x="2.6" y="6.6" width="4.6" height="3.4" fill="#3a370c"/><rect x="5.4" y="7.2" width="1.2" height="2.2" fill="#ddd"/></svg>
<div class="b" style="left:45.1px;top:16.6px;width:.9px;height:11.4px;background:#c6c6c6"></div>
<svg style="position:absolute;left:49px;top:17px" width="12" height="11" viewBox="0 0 12 11"><path d="M3.6 1.4 H9.4 L10.4 4 H2.6Z" fill="#dcdcdc" stroke="#b4b4b4" stroke-width=".6"/><path d="M1.2 4 H11 Q11.8 4 11.6 5 L11 7.6 Q10.8 8.4 10 8.4 H1 Q.2 8.4 .4 7.4 L.8 4.6 Q.9 4 1.2 4Z" fill="#c4c4c4" stroke="#adadad" stroke-width=".5"/><path d="M2.6 7 H9.4 L9.8 9.4 H2.2Z" fill="#e4e4e4" stroke="#b0b0b0" stroke-width=".5"/></svg>
<div class="b" style="left:64.89999999999999px;top:16.6px;width:.9px;height:11.4px;background:#c6c6c6"></div>
<svg style="position:absolute;left:70px;top:19.2px" width="10" height="7" viewBox="0 0 10 7"><path d="M1.8 3.8 Q4.6 .4 7.6 2.6 Q9.2 4.4 7.2 6" stroke="#a8a8a8" stroke-width="1.1" fill="none"/><path d="M.3 1.8 L.7 5.2 L3.9 4.4Z" fill="#a8a8a8"/></svg>
<svg style="position:absolute;left:85.4px;top:19.2px" width="10" height="7" viewBox="0 0 10 7"><path d="M8.2 3.8 Q5.4 .4 2.4 2.6 Q.8 4.4 2.8 6" stroke="#b0b0b0" stroke-width="1.1" fill="none"/><path d="M9.7 1.8 L9.3 5.2 L6.1 4.4Z" fill="#b0b0b0"/></svg>
<svg style="position:absolute;left:102px;top:17px" width="8" height="11" viewBox="0 0 8 11"><path d="M2.7 .4 L5 7.2 M4.9 .4 L2.6 7.2" stroke="#a6a6a6" stroke-width=".9"/><ellipse cx="1.9" cy="8.4" rx="1.5" ry="1.3" fill="none" stroke="#a6a6a6" stroke-width=".9"/><ellipse cx="5.7" cy="8.4" rx="1.5" ry="1.3" fill="none" stroke="#a6a6a6" stroke-width=".9"/></svg>
<svg style="position:absolute;left:116px;top:17px" width="11.5" height="11" viewBox="0 0 11.5 11"><path d="M.5 .4 H3.4 L4.8 1.8 V7.4 H.5Z" fill="#fff" stroke="#4a4a4a" stroke-width=".8"/><path d="M1.8 2.2 V6.2" stroke="#aaa" stroke-width="1"/><path d="M4.2 2.4 H8.6 L10.8 4.6 V9.8 H4.2Z" fill="#fff" stroke="#2b30b0" stroke-width="1"/><path d="M6.2 5 V8.6 M8.4 5.8 V8.6" stroke="#8088c8" stroke-width="1.2"/></svg>
<svg style="position:absolute;left:132px;top:17px" width="11.5" height="11" viewBox="0 0 11.5 11"><rect x=".6" y="1.2" width="8.8" height="7.2" rx=".8" fill="#8f8c52" stroke="#4e4a22" stroke-width=".8"/><rect x="2.9" y=".3" width="4.2" height="2" fill="#cfcaa0" stroke="#55502a" stroke-width=".6"/><path d="M4.6 4.4 H8.8 L10.8 6.4 V10 H4.6Z" fill="#fff" stroke="#2b30b0" stroke-width="1"/><path d="M6.4 6.4 V8.8 M8.4 7 V8.8" stroke="#6870c0" stroke-width="1.2"/></svg>
<svg style="position:absolute;left:148.6px;top:17px" width="9" height="11" viewBox="0 0 9 11"><path d="M.8 1 L8.2 9.4 M8.2 1 L.8 9.4" stroke="#9b9b9b" stroke-width="1.1"/></svg>
<div class="b" style="left:163.0px;top:16.6px;width:.9px;height:11.4px;background:#c6c6c6"></div>
<svg style="position:absolute;left:167.3px;top:17px" width="11" height="11" viewBox="0 0 11 11"><path d="M1.9 .2 H3.7 L4.9 4.6 V9.2 H.3 V4.6Z" fill="#222"/><path d="M7.3 .2 H9.1 L10.7 4.6 V9.2 H6.1 V4.6Z" fill="#222"/><rect x="4.4" y="2.6" width="2.2" height="2.8" fill="#222"/><path d="M1.7 5 V8.4 M7.5 5 V8.4" stroke="#8c8c8c" stroke-width=".7"/></svg>
<svg style="position:absolute;left:183px;top:17px" width="11.4" height="11" viewBox="0 0 11.4 11"><path d="M.5 4 L2 .6 L3.5 4 M1.1 2.9 H2.9" stroke="#333" stroke-width=".8" fill="none"/><circle cx="7.8" cy="1.3" r=".9" fill="#111"/><path d="M4.8 2 Q7.6 3.2 6.4 6 M7.2 4.6 L6.4 6.2 L5 5.2" stroke="#4a4a4a" stroke-width=".8" fill="none"/><path d="M2.4 5 Q2 8.4 5 9 M3.6 7.6 L5.2 9 L3.8 10.2" stroke="#4a4a4a" stroke-width=".8" fill="none"/><path d="M8 6.4 V10.2 M8 6.4 Q10.4 6.8 8 8.2 Q10.8 9 8 10.2" stroke="#777" stroke-width=".7" fill="none"/></svg>
<svg style="position:absolute;left:199px;top:17px" width="11.5" height="11" viewBox="0 0 11.5 11"><path d="M1.9 .2 H3.7 L4.9 4.6 V9.2 H.3 V4.6Z" fill="#222"/><path d="M7.3 .2 H9.1 L10.7 4.6 V9.2 H6.1 V4.6Z" fill="#222"/><rect x="4.4" y="2.6" width="2.2" height="2.8" fill="#222"/><path d="M1.7 5 V8.4 M7.5 5 V8.4" stroke="#8c8c8c" stroke-width=".7"/><path d="M5 6 H11.2 V10.6 H5Z" fill="#f1c84b" stroke="#b98d17" stroke-width=".6"/></svg>
<svg style="position:absolute;left:214.4px;top:17px" width="11.5" height="11" viewBox="0 0 11.5 11"><path d="M.5 4 L2 .6 L3.5 4 M1.1 2.9 H2.9" stroke="#333" stroke-width=".8" fill="none"/><circle cx="7.8" cy="1.3" r=".9" fill="#111"/><path d="M4.8 2 Q7.6 3.2 6.4 5 " stroke="#4a4a4a" stroke-width=".8" fill="none"/><path d="M2.4 5 Q2 8 4.4 8.8" stroke="#4a4a4a" stroke-width=".8" fill="none"/><path d="M4.8 5.4 H11.2 V10.4 H4.8Z" fill="#f1c84b" stroke="#a8821a" stroke-width=".6"/></svg>
<div class="b" style="left:230.0px;top:16.6px;width:.9px;height:11.4px;background:#c6c6c6"></div>
<svg style="position:absolute;left:236.7px;top:17px" width="7" height="11" viewBox="0 0 7 11"><path d="M.4 .6 H6.4 V9.6 L3.4 7 L.4 9.6Z" fill="#b3b3b3"/></svg>
<svg style="position:absolute;left:252px;top:17px" width="8.4" height="11" viewBox="0 0 8.4 11"><path d="M4 .8 H8 V9.8 L6 8 L4 9.8Z" fill="#b3b3b3"/><path d="M.4 3 H3.6 M.4 3 L2 1.2 M.4 3 L2 4.8" stroke="#9a9a9a" stroke-width=".9" fill="none"/></svg>
<svg style="position:absolute;left:266.7px;top:17px" width="9.4" height="11" viewBox="0 0 9.4 11"><path d="M5 .8 H9 V9.8 L7 8 L5 9.8Z" fill="#b3b3b3"/><path d="M.4 3 H4 M4 3 L2.4 1.2 M4 3 L2.4 4.8" stroke="#9a9a9a" stroke-width=".9" fill="none"/></svg>
<svg style="position:absolute;left:282.5px;top:17px" width="9.4" height="11" viewBox="0 0 9.4 11"><path d="M5 .8 H9 V9.8 L7 8 L5 9.8Z" fill="#b3b3b3"/><path d="M.6 1 L4.4 5 M4.4 1 L.6 5" stroke="#9a9a9a" stroke-width=".9" fill="none"/></svg>
<div class="b" style="left:297.6px;top:16.6px;width:.9px;height:11.4px;background:#c6c6c6"></div>
<svg style="position:absolute;left:301px;top:17px" width="12.4" height="11" viewBox="0 0 12.4 11"><path d="M.6 .8 H8 V7 H.6Z" fill="#f2f2f2" stroke="#505050" stroke-width=".9"/><path d="M.6 1.4 H8" stroke="#505050" stroke-width="1.4"/><path d="M3.4 4.2 H11.8 V9.6 H3.4Z" fill="#f4f4f8" stroke="#4a4a4a" stroke-width=".9"/><rect x="6.6" y="5.4" width="4.4" height="3" fill="#8c94dc"/><rect x="4.4" y="5.4" width="2.2" height="3" fill="#cfd2ee"/></svg>
<div class="b" style="left:317.20000000000005px;top:16.6px;width:.9px;height:11.4px;background:#c6c6c6"></div>
<svg style="position:absolute;left:322px;top:17px" width="10.6" height="11" viewBox="0 0 10.6 11"><path d="M.6 2.2 H5 L7.4 4.6 V10.2 H.6Z" fill="#fff" stroke="#8a8a8a" stroke-width=".8"/><path d="M7.8 5 V10.6 H1" stroke="#c4c4c4" stroke-width=".7" fill="none"/><path d="M6.4 2.4 Q7.2 .4 9.6 1.4 M9.6 1.4 L8.2 .3 M9.6 1.4 L8.8 2.9" stroke="#444" stroke-width=".8" fill="none"/></svg>
<div class="b" style="left:336.6px;top:16.6px;width:.9px;height:11.4px;background:#c6c6c6"></div>
<svg style="position:absolute;left:341.2px;top:17px" width="11.4" height="11" viewBox="0 0 11.4 11"><rect x=".5" y="3" width="10.4" height="6.6" fill="#f4f4f4" stroke="#a2a2a2" stroke-width=".8"/><rect x="1" y="6.4" width="9.4" height="2.8" fill="#d6d6d6"/><path d="M1 .8 L2 1.8 L3 .8 L4 1.8 L5 .8 L6 1.8 L7 .8 L8 1.8 L9 .8 L10 1.8" stroke="#8fa4f0" stroke-width=".6" fill="none"/><path d="M3.6 1.6 V5.2 M2.2 3.8 L3.6 5.6 L5 3.8Z M7.8 1.6 V5.2 M6.4 3.8 L7.8 5.6 L9.2 3.8Z" stroke="#2438d0" stroke-width=".8" fill="#2438d0"/></svg>
<div class="b" style="left:356.6px;top:16.6px;width:.9px;height:11.4px;background:#c6c6c6"></div>
<svg style="position:absolute;left:361.6px;top:17px" width="11" height="11" viewBox="0 0 11 11"><circle cx="4.4" cy="4.8" r="2.9" fill="#ffffff" stroke="#868cc2" stroke-width="1.7"/><circle cx="4.4" cy="4.8" r="4" fill="none" stroke="#868cc2" stroke-width="1" stroke-dasharray="1.4 1.1"/><circle cx="8.7" cy="2.4" r="1.7" fill="#18dc2a"/><path d="M6.6 6.2 L9 9.6 M9.2 9.8 V7.6 M9.2 9.8 H7.2" stroke="#333" stroke-width=".8" fill="none"/></svg>
<svg style="position:absolute;left:377px;top:17px" width="11" height="11" viewBox="0 0 11 11"><circle cx="4.4" cy="4.8" r="2.9" fill="#f6f6f6" stroke="#b6b6b6" stroke-width="1.7"/><circle cx="4.4" cy="4.8" r="4" fill="none" stroke="#b6b6b6" stroke-width="1" stroke-dasharray="1.4 1.1"/><path d="M7.2 .8 L10 3.6 M10 .8 L7.2 3.6" stroke="#9a9a9a" stroke-width=".9"/><path d="M8.6 6 Q10 8 8 9.8" stroke="#aaa" stroke-width=".8" fill="none"/></svg>
<svg style="position:absolute;left:398px;top:19px" width="5" height="9" viewBox="0 0 5 9"><path d="M.4 1.4 L4.4 4.6 L.4 7.8Z" fill="#a0a0a0"/></svg>
<svg style="position:absolute;left:412.8px;top:21px" width="6.4" height="6.4" viewBox="0 0 6.4 6.4"><rect x=".2" y=".4" width="6" height="5.6" fill="#a6a6a6"/></svg>
<div class="b" style="left:424.0px;top:16.6px;width:.9px;height:11.4px;background:#c6c6c6"></div>
<svg style="position:absolute;left:427.6px;top:16.4px" width="11.6" height="11" viewBox="0 0 11.6 11"><rect x="1.2" y="0" width="7.2" height="11" fill="#76ea72"/><path d="M.4 6.4 H11.2 V10.6 H.4Z" fill="#8c8c8c"/><path d="M2.6 3.2 H5.4 V7 H2.6Z M7.4 4.6 H9.8 V8 H7.4Z" fill="#5a5a5a"/></svg>
<svg style="position:absolute;left:444px;top:17px" width="10.6" height="11" viewBox="0 0 10.6 11"><circle cx="5.3" cy="5.4" r="4.6" fill="#fdfdfd" stroke="#6a6a6a" stroke-width=".8"/><path d="M5.3 2.6 V5.6 L7 7.2" stroke="#444" stroke-width=".8" fill="none"/></svg>
<div class="b" style="left:459.6px;top:16.6px;width:.9px;height:11.4px;background:#c6c6c6"></div>
<svg style="position:absolute;left:463px;top:17px" width="10.4" height="11" viewBox="0 0 10.4 11"><path d="M3 1 H9.6 V7 H3Z" fill="#e3e3e3" stroke="#b5b5b5" stroke-width=".8"/><path d="M1.2 1.2 V9 M1.2 9 L.2 7.6 M1.2 9 L2.4 7.6" stroke="#b5b5b5" stroke-width=".8" fill="none"/></svg>
<svg style="position:absolute;left:479px;top:17px" width="11" height="11" viewBox="0 0 11 11"><path d="M5 3.4 H10.4 V9 H5Z" fill="#e3e3e3" stroke="#b5b5b5" stroke-width=".8"/><path d="M4 5.6 Q.6 5 1.4 2 H4.6 M1.4 2 L2.8 .8 M1.4 2 L2.8 3.4" stroke="#b5b5b5" stroke-width=".8" fill="none"/></svg>
<svg style="position:absolute;left:494.5px;top:17px" width="10.6" height="11" viewBox="0 0 10.6 11"><path d="M4.4 4 H10 V9.4 H4.4Z" fill="#e3e3e3" stroke="#b5b5b5" stroke-width=".8"/><path d="M.8 2.4 H6 V4 M.8 2.4 L2.2 1 M.8 2.4 L2.2 3.8" stroke="#b5b5b5" stroke-width=".8" fill="none"/></svg>
<svg style="position:absolute;left:510px;top:17px" width="11" height="11" viewBox="0 0 11 11"><path d="M.4 3.4 H4.6 M4.6 3.4 L3.2 2 M4.6 3.4 L3.2 4.8" stroke="#b5b5b5" stroke-width=".9" fill="none"/><rect x="6" y="1.4" width="4.4" height="7.6" fill="#dcdcdc" stroke="#b5b5b5" stroke-width=".7"/></svg>
<svg style="position:absolute;left:527px;top:17px" width="9" height="11" viewBox="0 0 9 11"><path d="M3 1 Q6 -.2 6.6 2.4 Q6 4.6 3.6 5 Q1.6 6.4 3 8.6 Q4.6 10.4 6.6 9" stroke="#b5b5b5" stroke-width="1" fill="none"/><path d="M5.2 .4 L7.6 1.2 M1 4.8 H7 M5 3.4 L7 4.8 L5 6.2" stroke="#b5b5b5" stroke-width=".8" fill="none"/></svg>
<div class="b" style="left:541.6px;top:16.6px;width:.9px;height:11.4px;background:#c6c6c6"></div>
<svg style="position:absolute;left:547.6px;top:18.4px" width="7" height="8" viewBox="0 0 7 8"><path d="M.5 2.6 H3.4 V.8 L6.4 4 L3.4 7.2 V5.4 H.5Z" fill="#f4f4f4" stroke="#777" stroke-width=".8"/></svg>
<div class="b" style="left:561.6px;top:16.6px;width:.9px;height:11.4px;background:#c6c6c6"></div>
<svg style="position:absolute;left:566.5px;top:17px" width="11" height="11" viewBox="0 0 11 11"><path d="M.6 1.4 H4.4 V5 M4.4 1.4 L.8 5" stroke="#8a8a8a" stroke-width="1" fill="none"/><path d="M3.4 7 L5.8 9.6 L10.4 3.6" stroke="#8f8f8f" stroke-width="1.1" fill="none"/></svg>
<div class="t" style="left:6.6px;top:-0.4px;font-size:9.5px;color:#151515;transform:scaleX(0.784)">File</div>
<div class="t" style="left:31.4px;top:-0.4px;font-size:9.5px;color:#151515;transform:scaleX(0.806)">Edit</div>
<div class="t" style="left:58.0px;top:-0.4px;font-size:9.5px;color:#151515;transform:scaleX(0.818)">View</div>
<div class="t" style="left:88.3px;top:-0.4px;font-size:9.5px;color:#151515;transform:scaleX(0.845)">Project</div>
<div class="t" style="left:126.7px;top:-0.4px;font-size:9.5px;color:#151515;transform:scaleX(0.847)">Build</div>
<div class="t" style="left:158.4px;top:-0.4px;font-size:9.5px;color:#151515;transform:scaleX(0.859)">Online</div>
<div class="t" style="left:194.9px;top:-0.4px;font-size:9.5px;color:#151515;transform:scaleX(0.846)">Debug</div>
<div class="t" style="left:232.2px;top:-0.4px;font-size:9.5px;color:#151515;transform:scaleX(0.856)">Tools</div>
<div class="t" style="left:264.0px;top:-0.4px;font-size:9.5px;color:#151515;transform:scaleX(0.882)">Window</div>
<div class="t" style="left:307.0px;top:-0.4px;font-size:9.5px;color:#151515;transform:scaleX(0.834)">Help</div>
<div class="t" style="left:-0.5px;top:50.2px;font-size:8.6px;color:#000;transform:scaleX(0.818)">Devices</div>
<div class="t" style="left:25.3px;top:65.0px;font-size:8.4px;font-style:italic;color:#000;transform:scaleX(0.845)">HX3040Publisher</div>
<div class="t" style="left:38.9px;top:78.0px;font-size:8.4px;color:#000;transform:scaleX(0.858)">Device (HX3040)</div>
<div class="t" style="left:52.4px;top:91.0px;font-size:8.4px;color:#000;transform:scaleX(0.787)">PLC Logic</div>
<div class="t" style="left:66.6px;top:104.0px;font-size:8.4px;font-weight:bold;color:#000;transform:scaleX(0.934)">Application</div>
<div class="t" style="left:79.8px;top:117.0px;font-size:8.4px;color:#000;transform:scaleX(0.856)">Bill of Materials</div>
<div class="t" style="left:79.8px;top:130.0px;font-size:8.4px;color:#000;transform:scaleX(0.874)">Configuration and Consumption</div>
<div class="t" style="left:79.8px;top:143.0px;font-size:8.4px;color:#000;transform:scaleX(0.852)">IEC61850 Generated POUs</div>
<div class="t" style="left:92.9px;top:156.0px;font-size:8.4px;color:#000;transform:scaleX(0.848)">Logical Nodes</div>
<div class="t" style="left:92.9px;top:169.0px;font-size:8.4px;color:#000;transform:scaleX(0.847)">IEC61850_Generated_GVL</div>
<div class="t" style="left:92.9px;top:182.0px;font-size:8.4px;color:#000;transform:scaleX(0.844)">IEC61850_LogicalDeviceFB (FB)</div>
<div class="t" style="left:92.9px;top:195.0px;font-size:8.4px;color:#000;transform:scaleX(0.845)">IEC61850_ServerPRG (PRG)</div>
<div class="t" style="left:79.8px;top:208.0px;font-size:8.4px;color:#000;transform:scaleX(0.802)">SystemGVLs</div>
<div class="t" style="left:92.9px;top:221.0px;font-size:8.4px;color:#000;transform:scaleX(0.881)">IOQualities</div>
<div class="t" style="left:92.9px;top:234.0px;font-size:8.4px;color:#000;transform:scaleX(0.86)">Module_Diagnostics</div>
<div class="t" style="left:92.9px;top:247.0px;font-size:8.4px;color:#000;transform:scaleX(0.851)">Special_Variables</div>
<div class="t" style="left:92.9px;top:260.0px;font-size:8.4px;color:#000;transform:scaleX(0.861)">System_Diagnostics</div>
<div class="t" style="left:79.8px;top:273.0px;font-size:8.4px;color:#000;transform:scaleX(0.82)">SystemPOUs</div>
<div class="t" style="left:79.8px;top:286.0px;font-size:8.4px;color:#000;transform:scaleX(0.795)">UserGVLs</div>
<div class="t" style="left:92.9px;top:299.0px;font-size:8.4px;color:#000;transform:scaleX(0.837)">Disables</div>
<div class="t" style="left:92.9px;top:312.0px;font-size:8.4px;color:#000;transform:scaleX(0.848)">EnviaGoose</div>
<div class="t" style="left:92.9px;top:325.0px;font-size:8.4px;color:#000;transform:scaleX(0.871)">Qualities</div>
<div class="t" style="left:92.9px;top:338.0px;font-size:8.4px;color:#000;transform:scaleX(0.864)">ReqDiagnostics</div>
<div class="t" style="left:79.8px;top:351.0px;font-size:8.4px;color:#000;transform:scaleX(0.812)">UserPOUs</div>
<div class="t" style="left:92.9px;top:364.0px;font-size:8.4px;color:#000;transform:scaleX(0.841)">EnviaDadosGoose (PRG)</div>
<div class="t" style="left:92.9px;top:377.0px;font-size:8.4px;color:#000;transform:scaleX(0.864)">fbCalculaValidade (FB)</div>
<div class="t" style="left:92.9px;top:390.0px;font-size:8.4px;color:#000;transform:scaleX(0.863)">StartPrg (PRG)</div>
<div class="t" style="left:92.9px;top:403.0px;font-size:8.4px;color:#000;transform:scaleX(0.833)">UserPrg (PRG)</div>
<div class="t" style="left:248.0px;top:50.3px;font-size:8.4px;color:#000;transform:scaleX(0.873)">Configuration (Bus)</div>
<div class="t" style="left:355.0px;top:50.3px;font-size:8.4px;color:#000;transform:scaleX(0.844)">EnviaGoose</div>
<div class="t" style="left:432.8px;top:50.3px;font-size:8.6px;font-weight:bold;color:#000;transform:scaleX(0.966)">IEC_61850_Server</div>
<div class="t" style="left:225.8px;top:74.0px;font-size:8.4px;color:#1a1a1a;transform:scaleX(0.941)">Configuration</div>
<div class="t" style="left:225.8px;top:98.0px;font-size:8.4px;color:#1a1a1a;transform:scaleX(0.895)">DataSet</div>
<div class="t" style="left:225.8px;top:122.0px;font-size:8.4px;color:#1a1a1a;transform:scaleX(0.935)">Report</div>
<div class="t" style="left:225.8px;top:146.0px;font-size:8.4px;color:#1a1a1a;transform:scaleX(0.858)">GOOSE Publisher</div>
<div class="t" style="left:225.8px;top:170.0px;font-size:8.4px;color:#1a1a1a;transform:scaleX(0.868)">GOOSE Subscriber</div>
<div class="t" style="left:225.8px;top:194.0px;font-size:8.4px;color:#1a1a1a;transform:scaleX(0.969)">Information</div>
<div class="t" style="left:225.8px;top:218.0px;font-size:8.4px;color:#1a1a1a;transform:scaleX(0.914)">IEC 61850 Variables Mapping</div>
<div class="t" style="left:390.0px;top:72.0px;font-size:8.4px;color:#000;transform:scaleX(0.861)">IEC 61850 Variable</div>
<div class="t" style="left:549.8px;top:72.0px;font-size:8.4px;color:#000;transform:scaleX(0.867)">Origin Variable</div>
<div class="t" style="left:387.6px;top:86.0px;font-size:8.4px;color:#fff;transform:scaleX(0.876)">gfbIEC61850_LogicalDevice.GGIO1.fbInd.stVal</div>
<div class="t" style="left:547.2px;top:86.0px;font-size:8.4px;color:#000;transform:scaleX(0.867)">EnviaGoose.xStatusValue</div>
</body></html>
